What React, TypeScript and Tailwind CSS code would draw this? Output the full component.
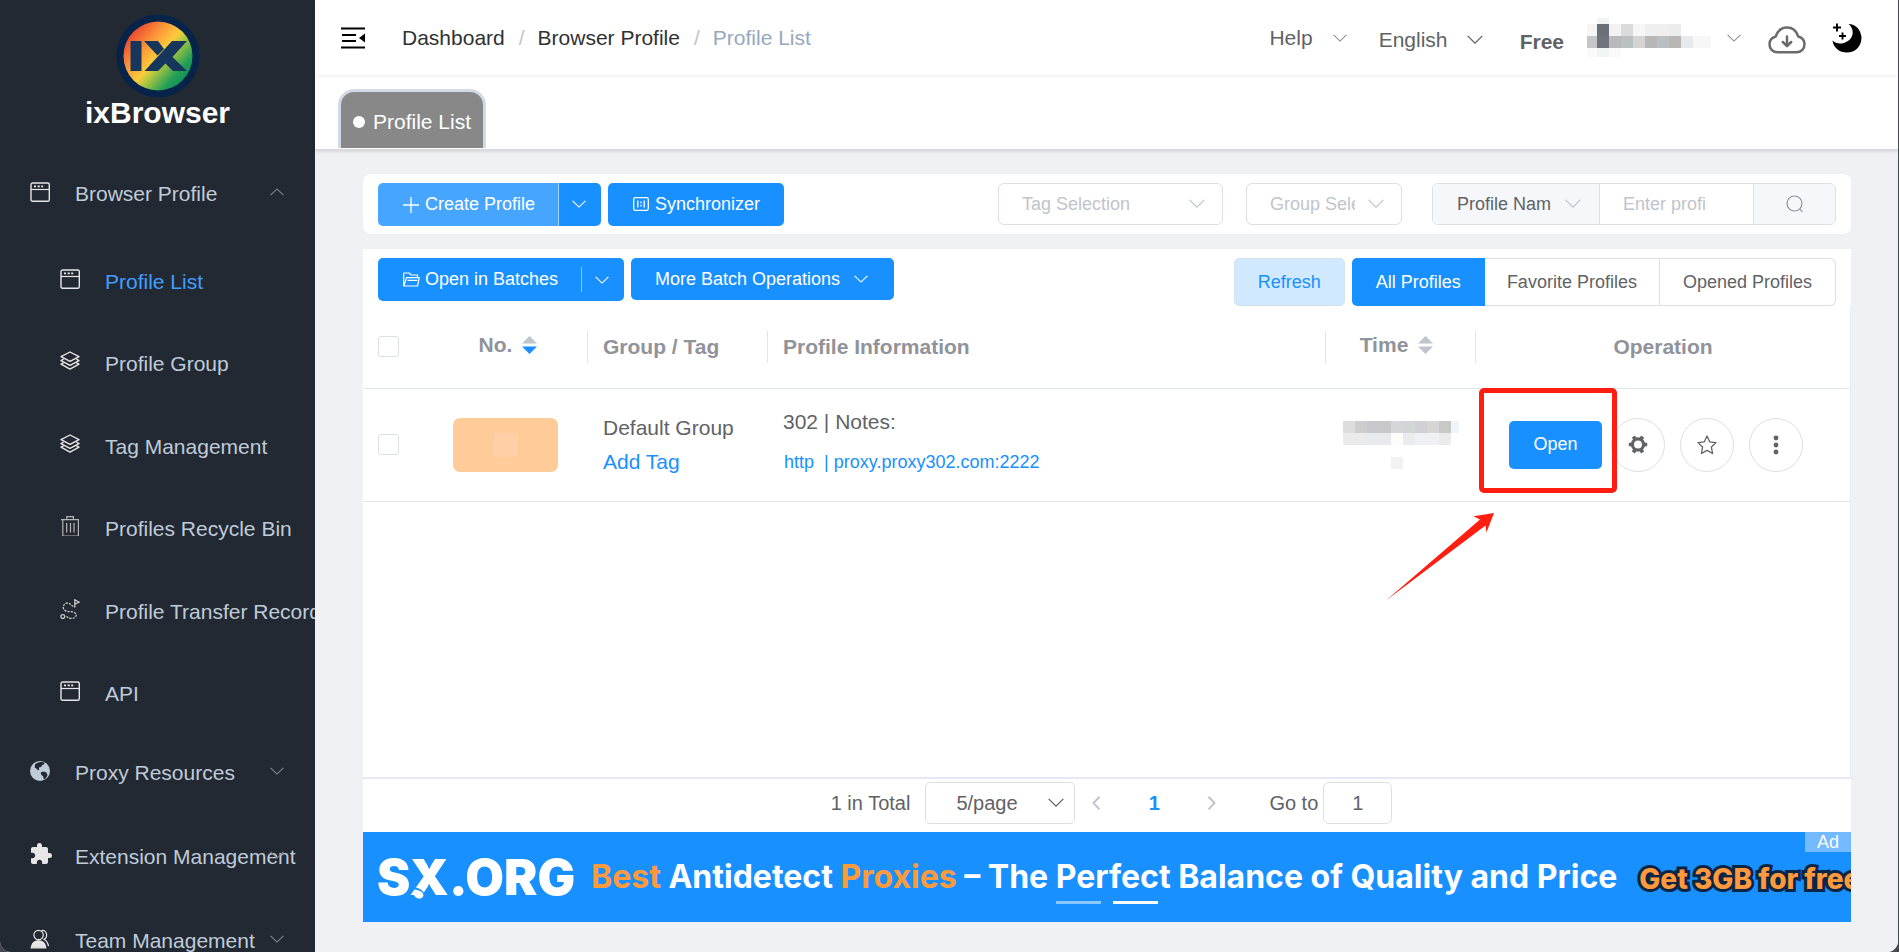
import type { ComponentType, ReactNode } from "react";
import { MdExtension } from "react-icons/md";

type IconProps = { className?: string };

function Chevron({ className = "w-3.5", up = false }: { className?: string; up?: boolean }) {
  return (
    <svg viewBox="0 0 14 8" className={className} fill="none" stroke="currentColor" aria-hidden="true">
      <path d={up ? "M.6 7.2 7 .9l6.4 6.3" : "M.6.8 7 7.1 13.4.8"} strokeWidth="1.1" />
    </svg>
  );
}

function WindowIcon({ className }: IconProps) {
  return (
    <svg viewBox="0 0 20 20" className={className} fill="none" stroke="#e6e6e6" aria-hidden="true">
      <rect x="1" y="1" width="18.3" height="18.3" rx="1.6" strokeWidth="1.4" />
      <path d="M1 7.5h18" strokeWidth="1.2" />
      <path d="M4 4.4h2M7.6 4.4h2.2M11.2 4.4h2" strokeWidth="1.7" />
    </svg>
  );
}

function LayersIcon({ className }: IconProps) {
  return (
    <svg viewBox="0 0 20 20" className={className} fill="none" stroke="#e6e6e6" strokeWidth="1.4" strokeLinejoin="round" aria-hidden="true">
      <path d="M10 1 19 5.6 10 10.4 1 5.6Z" />
      <path d="M3.6 8.2 1 9.6l9 4.7 9-4.7-2.6-1.4" />
      <path d="M3.6 11.8 1 13.2l9 4.9 9-4.9-2.6-1.4" />
    </svg>
  );
}

function TrashIcon({ className }: IconProps) {
  return (
    <svg viewBox="0 0 20 20" className={className} fill="none" stroke="#b4b5b6" strokeWidth="1.2" aria-hidden="true">
      <path d="M1 3.6h18M6.8 3.4V.7h6.6v2.7M2.8 3.8V20h15.6V3.8M6.7 7v9.6M10.5 7v9.6M14 7v9.6" />
    </svg>
  );
}

function RouteIcon({ className }: IconProps) {
  return (
    <svg viewBox="0 0 20 20" className={className} fill="none" stroke="#c9c9c9" strokeWidth="1.3" aria-hidden="true">
      <path d="M14.8 8.6V.8l4.4 2.4-4.4 2" />
      <circle cx="2.8" cy="17.6" r="1.9" />
      <path
        d="M6.500 17.400c1.600 1.200 2.400 2 4.800 2 6 0 6.300-5.600 1.800-6.400-3-.5-5-.2-7.500-1.2C1.6 10.300 3 4 7.600 4c2.800 0 4 3.600 7.200 3.600"
        strokeDasharray="2.200 1.100"
      />
    </svg>
  );
}

function GlobeIcon({ className }: IconProps) {
  return (
    <svg viewBox="0 0 20 20" className={className} aria-hidden="true">
      <circle cx="10" cy="10" r="10" fill="#bfcbd9" />
      <path d="M5 3.200C8 .8 13 .6 14.600 1.600l-.6 2-2 .4-.8 2-2.400.6 .4 2.200-1.200.4-2-2-1.200-.4Z" fill="#232932" />
      <path d="M10.800 11.200l3-.8 2.600 1.200 1.200 2.600-1.800 3-2 1.200-.6-3-2.200-2Z" fill="#232932" />
    </svg>
  );
}

function PuzzleIcon({ className }: IconProps) {
  return (
    <svg viewBox="0 0 20 20" className={className} overflow="visible" aria-hidden="true">
      <MdExtension size={24} x={-1} y={-3} color="#e6e6e6" />
    </svg>
  );
}

function TeamIcon({ className }: IconProps) {
  return (
    <svg viewBox="0 0 20 20" className={className} fill="none" stroke="#e6e6e6" strokeWidth="1.200" aria-hidden="true">
      <circle cx="8.600" cy="6" r="4.700" />
      <path d="M11.500 1.600c6-1.400 6.500 7 2.500 8.600 2.600 1.400 4 3.800 4.500 7" />
      <path d="M1.200 18.800c.6-5 3-7 7.300-7s6.800 2 7.300 7Z" fill="#e6e6e6" />
    </svg>
  );
}

function Logo() {
  return (
    <svg viewBox="0 0 84 84" className="size-[84px]" aria-hidden="true">
      <defs>
        <linearGradient id="ring" x1="0.1" y1="0.15" x2="0.9" y2="0.85">
          <stop offset="0" stopColor="#e8432f" />
          <stop offset="0.3" stopColor="#fc9a3a" />
          <stop offset="0.5" stopColor="#fdcb3c" />
          <stop offset="0.6" stopColor="#b9c83f" />
          <stop offset="0.85" stopColor="#22a057" />
          <stop offset="1" stopColor="#0f9158" />
        </linearGradient>
      </defs>
      <circle cx="42" cy="42" r="41.500" fill="#06244a" />
      <circle cx="42" cy="42" r="34.500" fill="url(#ring)" />
      <path d="M14.500 27H25.500V57H14.500Z" fill="#17365c" />
      <path d="M28 27h14l6 8-6.500 6.500Z" fill="#17365c" />
      <path d="M56 27h15L56.500 43 71 57H57l-7.500-7.500L42 57H28.500Z" fill="#17365c" />
    </svg>
  );
}

const subItems: { label: string; icon: ComponentType<IconProps>; active?: boolean }[] = [
  { label: "Profile List", icon: WindowIcon, active: true },
  { label: "Profile Group", icon: LayersIcon },
  { label: "Tag Management", icon: LayersIcon },
  { label: "Profiles Recycle Bin", icon: TrashIcon },
  { label: "Profile Transfer Records", icon: RouteIcon },
  { label: "API", icon: WindowIcon },
];

function TopItem({ label, icon: Icon, open = false }: { label: string; icon: ComponentType<IconProps>; open?: boolean }) {
  return (
    <button type="button" aria-expanded={open} className="relative flex h-[84px] w-full shrink-0 items-center gap-[25px] pl-[30px] text-left whitespace-nowrap">
      <Icon className="mb-[5px] size-5 shrink-0" />
      {label}
      <span className="absolute right-[31px] mb-[5px] text-[#7f8894]">
        <Chevron up={open} />
      </span>
    </button>
  );
}

function Sidebar() {
  return (
    <aside className="flex w-[315px] shrink-0 flex-col overflow-hidden bg-[#232932] text-[21px] text-[#bfcbd9]">
      <div className="flex h-[152px] shrink-0 flex-col items-center pt-3.5">
        <Logo />
        <h1 className="text-[30px] leading-[30px] font-bold text-white">ixBrowser</h1>
      </div>
      <nav className="flex flex-col">
        <TopItem label="Browser Profile" icon={WindowIcon} open />
        <ul className="mt-1 -mb-1 grid h-[495px] shrink-0 grid-rows-6">
          {subItems.map(({ label, icon: Icon, active }) => (
            <li key={label} className="flex">
              <a href="#" className={active ? "flex items-center gap-[25px] pl-[60px] whitespace-nowrap text-[#409eff]" : "flex items-center gap-[25px] pl-[60px] whitespace-nowrap"}>
                <Icon className="mb-[5px] size-5 shrink-0" />
                {label}
              </a>
            </li>
          ))}
        </ul>
        <TopItem label="Proxy Resources" icon={GlobeIcon} />
        <TopItem label="Extension Management" icon={PuzzleIcon} />
        <TopItem label="Team Management" icon={TeamIcon} />
      </nav>
    </aside>
  );
}

const accountPixels: [number, number, number, number, string][] = [
  [10, 0, 12, 6, "#f2f3f3"],
  [0, 6, 10, 12, "#f5f5f6"], [10, 6, 12, 12, "#6a6f78"], [22, 6, 12, 12, "#f2f2f3"], [34, 6, 12, 12, "#dadcdc"], [46, 6, 12, 12, "#f6f6f7"], [58, 6, 24, 12, "#efefef"], [82, 6, 12, 12, "#ececed"],
  [0, 18, 10, 12, "#c5c5ca"], [10, 18, 12, 12, "#70737c"], [22, 18, 12, 12, "#b8b9bd"], [34, 18, 12, 12, "#bbc0c2"], [46, 18, 12, 12, "#d4d5d2"], [58, 18, 12, 12, "#b8b7b7"], [70, 18, 12, 12, "#babfc3"], [82, 18, 12, 12, "#b9b6b5"], [94, 18, 12, 12, "#e6eaed"], [106, 18, 18, 12, "#f7f7f7"],
  [0, 30, 10, 9, "#fafafa"], [10, 30, 12, 9, "#f3f5f4"], [22, 30, 12, 9, "#fafafa"],
];

const timePixels: [number, number, number, number, string][] = [
  [0, 0, 12, 12, "#dddddd"], [12, 0, 12, 12, "#cdcdcf"], [24, 0, 12, 12, "#c6c8cd"], [36, 0, 12, 12, "#c8c8ca"], [48, 0, 12, 12, "#d5d6da"], [60, 0, 12, 12, "#d2d6d7"], [72, 0, 12, 12, "#d1d1d5"], [84, 0, 12, 12, "#d7d6d5"], [96, 0, 12, 12, "#c8c8c9"], [108, 0, 8, 12, "#f0f4f8"],
  [0, 12, 24, 12, "#ebebeb"], [24, 12, 24, 12, "#e9eaeb"], [48, 12, 12, 12, "#fcfcf9"], [60, 12, 12, 12, "#ebebed"], [72, 12, 24, 12, "#eff0f3"], [96, 12, 12, 12, "#ebebec"],
  [48, 36, 12, 12, "#f2f2f2"],
];

function Mosaic({ cells, className, viewBox }: { cells: [number, number, number, number, string][]; className: string; viewBox: string }) {
  return (
    <svg viewBox={viewBox} className={className} shapeRendering="crispEdges" aria-hidden="true">
      {cells.map(([x, y, w, h, fill]) => (
        <rect key={`${x}-${y}`} x={x} y={y} width={w} height={h} fill={fill} />
      ))}
    </svg>
  );
}

function Header() {
  return (
    <header className="relative z-10 flex h-[75px] shrink-0 items-center bg-white pr-[36px] pl-[26px] text-[21px] text-[#606266] shadow-[0_1px_4px_rgba(0,21,41,0.08)]">
      <button type="button" aria-label="Collapse menu">
        <svg viewBox="0 0 24 22" className="h-[22px] w-6" aria-hidden="true">
          <path d="M0 1.500h24M1 8h14M1 14h14M0 20.500h24" stroke="#000" strokeWidth="2.200" />
          <path d="M24 6.500v9L18 11Z" fill="#000" />
        </svg>
      </button>
      <nav aria-label="Breadcrumb" className="ml-[37px] flex text-[#303133]">
        <a href="#">Dashboard</a>
        <span className="mr-[13px] ml-3.5 text-[#c0c4cc]">/</span>
        <a href="#">Browser Profile</a>
        <span className="mr-[13px] ml-3.5 text-[#c0c4cc]">/</span>
        <span className="text-[#97a8be]">Profile List</span>
      </nav>
      <div className="ml-auto flex items-center">
        <button type="button" className="flex items-center gap-5">
          Help
          <Chevron className="w-3.5 text-[#8b8e94]" />
        </button>
        <div className="relative mt-1 ml-8 flex items-center">
          <select aria-label="Language" className="w-[104px] appearance-none bg-transparent">
            <option>English</option>
          </select>
          <Chevron className="pointer-events-none absolute right-0 w-4" />
        </div>
        <span className="mt-2 ml-[37px] font-bold">Free</span>
        <button type="button" aria-label="Account" className="ml-[23px] flex items-center gap-4">
          <Mosaic cells={accountPixels} viewBox="0 0 124 39" className="h-[39px] w-[124px]" />
          <Chevron className="w-3.5 text-[#8b8e94]" />
        </button>
        <button type="button" aria-label="Downloads" className="mt-1 ml-[27px]">
          <svg viewBox="0 0 38 28" className="h-7 w-[38px]" fill="none" stroke="#6b6b6b" strokeWidth="2.500" strokeLinecap="round" strokeLinejoin="round" aria-hidden="true">
            <path d="M9.500 26.300C4.500 26.300 1.500 22.500 1.500 18.300c0-4.300 3-7 6.300-7.800C9.500 5 13.500 1.500 19 1.500s9.500 3.500 11.200 9c3.300.8 6.300 3.500 6.300 7.800 0 4.200-3 8-8 8Z" />
            <path d="M19 10.500v9M14.800 16l4.200 4.200L23.200 16" />
          </svg>
        </button>
        <button type="button" aria-label="Dark mode" className="ml-[26px]">
          <svg viewBox="0 0 30 30" className="size-[30px]" fill="#000" aria-hidden="true">
            <path d="M16.500 1C23.500 1 29 6.800 29.500 14.500 29.500 23.500 23 29.500 15 29.500 7.500 29.500 1.500 25 .5 17.500c3 3 7 3.800 11.500 2.400C18 18 21.500 13.500 20.500 7.500 20 4.800 18.500 2.500 16.500 1Z" />
            <path d="M5 .5v8M1 4.500h8M10.500 9.500v7M7 13h7" stroke="#000" strokeWidth="1.900" />
          </svg>
        </button>
      </div>
    </header>
  );
}

function TabBar() {
  return (
    <div className="relative z-[5] flex h-[75px] shrink-0 items-start border-b border-[#d8dadf] bg-white pt-3.5 pl-[23px] shadow-[0_1px_4px_rgba(0,0,0,0.16)]">
      <a href="#" className="flex h-[59px] items-center gap-2 rounded-t-[16px] border-x-[3px] border-t-[3px] border-[#d3dae6] bg-[#888888] px-3 pt-1 text-[21px] text-white">
        <span className="size-3 rounded-full bg-white" />
        Profile List
      </a>
    </div>
  );
}

function PickList({ label, children, width }: { label: string; children: ReactNode; width: string }) {
  return (
    <div className={`relative flex items-center text-[#c0c4cc] ${width}`}>
      <select aria-label={label} className="h-[42px] w-full appearance-none rounded-md border border-[#dcdfe6] bg-white pr-[46px] pl-[23px]">
        {children}
      </select>
      <Chevron className="pointer-events-none absolute right-[18px] w-4" />
    </div>
  );
}

function ProfileToolbar() {
  return (
    <section className="flex h-[60px] shrink-0 items-center rounded-lg bg-white px-[15px] text-[18px]">
      <div className="flex h-[43px] text-white">
        <button type="button" className="flex w-[181px] items-center rounded-l-[5px] border-r border-[#a3d3ff] bg-[#46a6ff] pt-px pl-[25px]">
          <svg viewBox="0 0 16 16" className="mr-1.5 size-4" stroke="currentColor" strokeWidth="1.300" aria-hidden="true">
            <path d="M0 8h16M8 0v16" />
          </svg>
          Create Profile
        </button>
        <button type="button" aria-label="More create options" className="flex w-[42px] items-center justify-center rounded-r-[5px] bg-[#1890ff] pr-0.5">
          <Chevron />
        </button>
      </div>
      <button type="button" className="ml-[7px] flex h-[43px] items-center rounded-[5px] bg-[#1890ff] pt-px pr-6 pl-[25px] text-white">
        <svg viewBox="0 0 16 14" className="mr-1.5 mb-0.5 h-3.5 w-4" fill="none" stroke="currentColor" strokeWidth="1.300" aria-hidden="true">
          <rect x=".7" y=".7" width="14.600" height="12.600" rx="1.500" />
          <path d="M4.800 3.500v7M11.200 3.500v7M8 4.500v1.800M8 7.800v1.800" />
        </svg>
        Synchronizer
      </button>
      <div className="ml-auto flex items-center">
        <PickList label="Tag" width="w-[225px]">
          <option>Tag Selection</option>
        </PickList>
        <div className="ml-[23px]">
          <PickList label="Group" width="w-[156px]">
            <option>Group Selection</option>
          </PickList>
        </div>
        <div className="ml-[30px] flex h-[42px] overflow-hidden rounded-md border border-[#dcdfe6]">
          <div className="relative flex items-center bg-[#f5f7fa] text-[#c0c4cc]">
            <select aria-label="Search by" className="h-full w-[167px] appearance-none border-r border-[#dcdfe6] pr-[48px] pl-6 text-[#606266]">
              <option>Profile Name</option>
            </select>
            <Chevron className="pointer-events-none absolute right-[19px] w-4" />
          </div>
          <input type="text" aria-label="Search text" placeholder="Enter profile name" className="w-[153px] bg-white pr-[46px] pl-[23px] outline-none placeholder:text-[#c0c4cc]" />
          <button type="button" aria-label="Search" className="flex w-[82px] items-center justify-center border-l border-[#dcdfe6] bg-[#f5f7fa] text-[#909399]">
            <svg viewBox="0 0 18 18" className="size-[18px]" fill="none" stroke="currentColor" strokeWidth="1.200" aria-hidden="true">
              <circle cx="8.500" cy="8.500" r="7.500" />
              <path d="m13.800 14.200 2.700 2.700" />
            </svg>
          </button>
        </div>
      </div>
    </section>
  );
}

function BatchToolbar() {
  return (
    <div className="flex h-[57px] shrink-0 items-start px-[15px] pt-[9px] text-[18px]">
      <div className="flex h-[43px] items-center rounded-[5px] bg-[#1890ff] text-white">
        <button type="button" className="flex w-[203px] items-center pl-[25px]">
          <svg viewBox="0 0 17 15" className="mr-[5px] h-[15px] w-[17px]" fill="none" stroke="currentColor" strokeWidth="1.200" strokeLinejoin="round" aria-hidden="true">
            <path d="M.7 14V1h5.500l1.800 2h6.500v2.500M.9 14 3.500 5.600h12.800L14.500 14ZM4.500 8.300h10" />
          </svg>
          Open in Batches
        </button>
        <button type="button" aria-label="More open options" className="flex h-[25px] w-[43px] items-center justify-center border-l border-[#8bc7ff] pr-0.5">
          <Chevron />
        </button>
      </div>
      <button type="button" className="ml-[7px] flex h-[42px] items-center gap-3.5 rounded-[5px] bg-[#1890ff] pr-[26px] pl-6 text-white">
        More Batch Operations
        <Chevron />
      </button>
      <button type="button" className="ml-auto h-12 rounded-[5px] border border-[#d3e2f0] bg-[#d1e9ff] px-[23px] text-[#1890ff]">
        Refresh
      </button>
      <div className="ml-[7px] flex h-12 text-[#606266]">
        <button type="button" className="rounded-l-[5px] bg-[#1890ff] px-6 text-white">All Profiles</button>
        <button type="button" className="border-y border-r border-[#dcdfe6] px-[22px]">Favorite Profiles</button>
        <button type="button" className="rounded-r-[6px] border-y border-r border-[#dcdfe6] px-[23px]">Opened Profiles</button>
      </div>
    </div>
  );
}

function Sorter({ descending = false }: { descending?: boolean }) {
  return (
    <svg viewBox="0 0 15 18" className="h-[18px] w-[15px]" aria-hidden="true">
      <path d="M0 7.500 7.500 0 15 7.500Z" fill="#c0c4cc" />
      <path d="M0 10.500 7.500 18 15 10.500Z" fill={descending ? "#1890ff" : "#c0c4cc"} />
    </svg>
  );
}

function CheckBox({ label }: { label: string }) {
  return (
    <input type="checkbox" aria-label={label} className="ml-[15px] block size-[21px] appearance-none rounded-[3px] border border-[#dcdfe6] bg-white checked:bg-[#1890ff]" />
  );
}

function RoundButton({ label, children }: { label: string; children: ReactNode }) {
  return (
    <button type="button" aria-label={label} className="flex size-[54px] items-center justify-center rounded-full border border-[#dcdfe6] text-[#606266]">
      {children}
    </button>
  );
}

function ProfileTable() {
  return (
    <div className="flex-1 border-r border-b-2 border-r-[#e6ebf5] border-b-[#e4e9f5]">
      <table className="w-full table-fixed border-collapse text-left text-[21px] text-[#606266]">
        <colgroup>
          <col className="w-[60px]" />
          <col className="w-[165px]" />
          <col className="w-[180px]" />
          <col />
          <col className="w-[150px]" />
          <col className="w-[374px]" />
        </colgroup>
        <thead className="text-[#909399]">
          <tr className="h-[82px] border-b border-[#dfe6ec]">
            <th className="p-0"><CheckBox label="Select all profiles" /></th>
            <th className="p-0">
              <div className="flex h-8 items-center justify-center gap-2.5 border-r border-[#dfe6ec] pb-1 pl-1.5">
                No. <Sorter descending />
              </div>
            </th>
            <th className="p-0"><div className="flex h-8 items-center border-r border-[#dfe6ec] pl-[15px]">Group / Tag</div></th>
            <th className="p-0"><div className="flex h-8 items-center border-r border-[#dfe6ec] pl-[15px]">Profile Information</div></th>
            <th className="p-0">
              <div className="flex h-8 items-center justify-center gap-2.5 border-r border-[#dfe6ec] pr-2 pb-1">
                Time <Sorter />
              </div>
            </th>
            <th className="p-0 text-center">Operation</th>
          </tr>
        </thead>
        <tbody>
          <tr className="h-[113px] border-b border-[#dfe6ec]">
            <td className="p-0"><CheckBox label="Select profile 302" /></td>
            <td className="p-0">
              <div className="mx-auto flex h-[54px] w-[105px] items-center justify-center rounded-[7px] bg-[#ffcb98]">
                <span className="size-6 bg-[#ffd0a6]" />
              </div>
            </td>
            <td className="p-0 pl-[15px] leading-[34px]">
              <div>Default Group</div>
              <a href="#" className="text-[#1890ff]">Add Tag</a>
            </td>
            <td className="p-0 pb-1.5 pl-[15px] leading-[41px]">
              <div>302 | Notes:</div>
              <a href="#" className="block pl-px text-[18px] text-[#1890ff]">http&nbsp; | proxy.proxy302.com:2222</a>
            </td>
            <td className="p-0">
              <Mosaic cells={timePixels} viewBox="0 0 116 48" className="mx-auto h-12 w-[116px]" />
            </td>
            <td className="relative p-0">
              <div className="flex items-center justify-center pr-3.5">
                <button type="button" className="h-12 rounded-[5px] bg-[#1890ff] px-6 text-[18px] text-white">Open</button>
                <div className="ml-[9px] flex gap-[15px]">
                  <RoundButton label="Settings">
                    <svg viewBox="0 0 20 20" className="size-5" fill="none" stroke="currentColor" aria-hidden="true">
                      <circle cx="10" cy="9.500" r="5.600" strokeWidth="3.200" />
                      <path d="M.8 9.500h3M16.200 9.500h3M5.400 1.500l1.500 2.600M13.100 14.900l1.500 2.600M5.400 17.500l1.500-2.600M13.100 4.100 14.600 1.500" strokeWidth="3.600" />
                    </svg>
                  </RoundButton>
                  <RoundButton label="Favorite">
                    <svg viewBox="0 0 20 20" className="size-5" fill="none" stroke="currentColor" strokeWidth="1.300" strokeLinejoin="round" aria-hidden="true">
                      <path d="m10 1 2.700 5.800 6.300.8-4.600 4.400 1.200 6.500L10 15.400l-5.600 3.100L5.600 12 1 7.600l6.300-.8Z" />
                    </svg>
                  </RoundButton>
                  <RoundButton label="More actions">
                    <svg viewBox="0 0 6 20" className="h-5 w-1.5" fill="currentColor" aria-hidden="true">
                      <circle cx="3" cy="3" r="2.400" />
                      <circle cx="3" cy="10" r="2.400" />
                      <circle cx="3" cy="17" r="2.400" />
                    </svg>
                  </RoundButton>
                </div>
              </div>
              <div className="pointer-events-none absolute -top-px left-[3px] h-[105px] w-[138px] rounded-[5px] border-[5px] border-[#ff1e10]" />
              <svg viewBox="0 0 108 88" className="pointer-events-none absolute top-[124px] -left-[90px] h-[88px] w-[108px] max-w-none" fill="#ff1e10" aria-hidden="true">
                <path d="M108 0 87.500 3.200l6.500 3.300L0 87.500 99.500 12.500l.9 7Z" />
              </svg>
            </td>
          </tr>
        </tbody>
      </table>
    </div>
  );
}

function Pagination() {
  return (
    <div className="flex h-[53px] shrink-0 items-start justify-center bg-white pt-[3px] pl-[9px] text-[20px] text-[#606266]">
      <div className="flex h-[42px] items-center">
        <span>1 in Total</span>
        <div className="relative ml-[15px] flex items-center">
          <select aria-label="Profiles per page" className="h-[42px] w-[150px] appearance-none rounded-[5px] border border-[#dcdfe6] bg-white pl-[30px]">
            <option>5/page</option>
          </select>
          <Chevron className="pointer-events-none absolute right-[11px] w-4" />
        </div>
        <button type="button" aria-label="Previous page" className="ml-[17px] text-[#c0c4cc]">
          <svg viewBox="0 0 8 14" className="h-3.5 w-2" fill="none" stroke="currentColor" strokeWidth="2" aria-hidden="true"><path d="M7.500.7 1.500 7l6 6.300" /></svg>
        </button>
        <button type="button" aria-current="page" className="w-[108px] text-center font-bold text-[#1890ff]">1</button>
        <button type="button" aria-label="Next page" className="text-[#c0c4cc]">
          <svg viewBox="0 0 8 14" className="h-3.5 w-2" fill="none" stroke="currentColor" strokeWidth="2" aria-hidden="true"><path d="m.5.7 6 6.300-6 6.300" /></svg>
        </button>
        <label htmlFor="page" className="ml-[53px]">Go to</label>
        <input id="page" type="text" defaultValue="1" className="ml-[5px] h-[42px] w-[69px] rounded-md border border-[#dcdfe6] bg-white text-center outline-none" />
      </div>
    </div>
  );
}

function Banner() {
  return (
    <a href="#" className="relative flex h-[90px] shrink-0 items-center overflow-hidden bg-[#1890ff] pl-3.5 font-[Inter,sans-serif] whitespace-nowrap text-white">
      <span className="relative w-[214px] shrink-0 text-[50px] leading-[90px] font-black">
        SX.ORG
        <svg viewBox="0 0 14 14" className="absolute top-[54px] left-[35px] size-3.5" aria-hidden="true">
          <path d="M2 2.500C5 2.500 9 4 11.500 8" fill="none" stroke="#1890ff" strokeWidth="1.800" />
          <ellipse cx="6.500" cy="8.500" rx="5" ry="3.800" transform="rotate(25 6.500 8.500)" fill="#fff" />
        </svg>
      </span>
      <span className="shrink-0 text-[32px] font-bold">
        <span className="text-[#ff9a3c]">Best</span> Antidetect <span className="text-[#ff9a3c]">Proxies</span> – The Perfect Balance of Quality and Price
      </span>
      <span className="ml-[22px] shrink-0 pt-1 text-[28px] font-extrabold text-[#ff9a3c] [-webkit-text-stroke:6px_#0b2547] [paint-order:stroke_fill]">Get 3GB for free</span>
      <span className="absolute top-0 right-0 flex h-5 w-[46px] items-center justify-center bg-[#74baff] font-['Liberation_Sans',sans-serif] text-[18px]">Ad</span>
      <span className="absolute inset-x-0 bottom-[18px] flex justify-center gap-3">
        <span className="h-[3px] w-[45px] bg-[#8bc7ff]" />
        <span className="h-[3px] w-[45px] bg-white" />
      </span>
    </a>
  );
}

export default function App() {
  return (
    <div className="h-screen bg-[#45484d] pr-px font-['Liberation_Sans',Arial,sans-serif]">
      <div className="flex h-full overflow-hidden rounded-b-[11px] bg-[#f0f2f5]">
        <Sidebar />
        <div className="flex min-w-0 flex-1 flex-col">
          <Header />
          <TabBar />
          <main className="flex min-h-0 flex-1 flex-col bg-[#eff1f5] pt-6 pr-[47px] pb-[30px] pl-12">
            <ProfileToolbar />
            <section className="mt-[15px] flex min-h-0 flex-1 flex-col bg-white">
              <BatchToolbar />
              <ProfileTable />
              <Pagination />
              <Banner />
            </section>
          </main>
        </div>
      </div>
    </div>
  );
}
